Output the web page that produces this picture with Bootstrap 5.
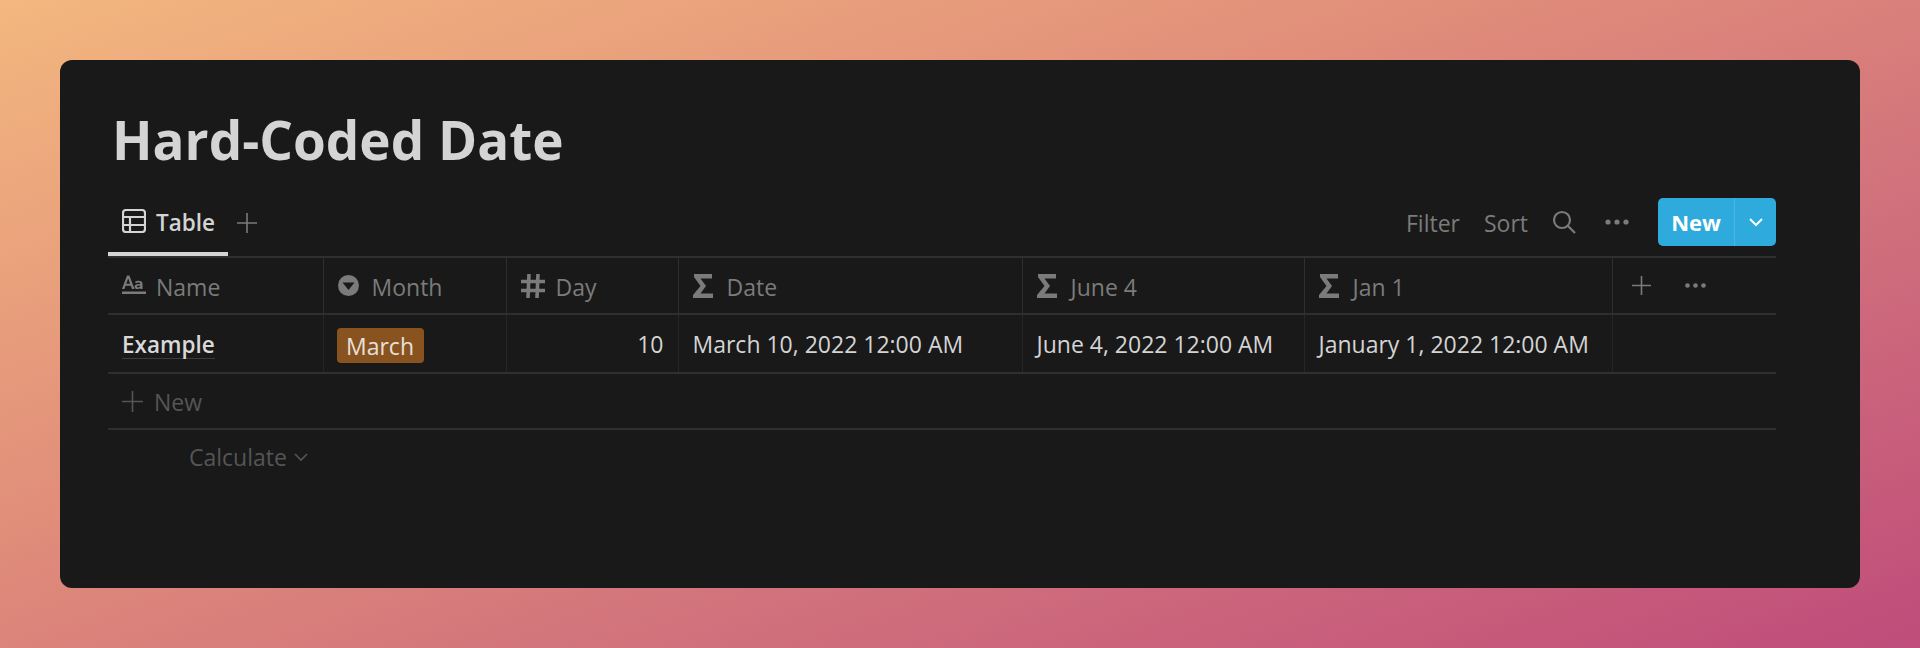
<!doctype html>
<html lang="en"><head><meta charset="utf-8"><title>Hard-Coded Date</title>
<link rel="stylesheet" href="https://cdn.jsdelivr.net/npm/bootstrap@5.3.0/dist/css/bootstrap.min.css">
<style>
html,body{height:648px;overflow:hidden}
body{background:linear-gradient(160deg,#f3b77f 0%,#e2917a 36%,#d06f7c 68%,#bf4c7a 100%);padding:60px;font-family:"Open Sans","Liberation Sans",sans-serif}
.panel{background:#191919;height:528px;border-radius:12px;padding:46px 84px 0 48px;color:#d4d4d4}
.page-title{font-size:53px;font-weight:700;line-height:68px;margin:0 0 0 4px;color:#d4d4d4}
.tabbar{height:62px;margin-top:20px;font-size:23px}
.tab-active{width:120px;height:62px;border-bottom:4px solid #d4d4d4;padding:0 0 6px 14px;font-weight:600;font-size:22.500px;gap:10px}
.tab-active span{padding-top:6px}
.tab-icon{margin-top:2px}
.plus-tab{margin:-5px 0 0 8px}
.action-group{margin-bottom:6px;color:#7b7b7b}
.action-text{padding-top:2px}
.gap-wide{margin-left:29px}
.new-btn{width:118px;height:48px;background:#2eaadc;border-radius:5px;color:#fff;font-weight:700;font-size:22px}
.new-main{width:77px;border-right:1px solid #4ab6e1}
.db-table{table-layout:fixed;width:1668px;margin:0;font-size:23px;--bs-table-bg:transparent;--bs-table-color:#d4d4d4;--bs-table-border-color:#2f2f2f;border-top:2px solid #2f2f2f}
.db-table th,.db-table td{padding:0 14px;vertical-align:middle;border-right:1px solid #262626;border-bottom:2px solid #2f2f2f;box-shadow:none;white-space:nowrap}
.db-table th{height:57px;font-weight:400;color:#7b7b7b;border-right-color:#2f2f2f}
.db-table td{height:59px;padding-top:2px}
.db-table tr>*:last-child{border-right:0}
.head-cell{gap:10px}
.head-cell span{padding-top:4px}
.gap-tag{gap:13px}
.gap-day{gap:11px}
.gap-sigma{gap:14px}
.row-name{font-weight:600;font-size:22.500px;color:#d9d9d9}
.row-name span{border-bottom:1px solid #3c3c3c;line-height:27px;display:inline-block}
.tag-march{display:block;background:#89531f;border-radius:4px;height:35px;width:87px;line-height:37px;text-align:center;color:#e6e0da;margin:1px 0 0 -1px}
.new-row{height:56px;border-bottom:2px solid #2f2f2f;padding-left:14px;color:#555;font-size:23px;gap:11px;width:1668px}
.new-row span{padding-top:2px}
.calc-row{height:54px;padding-left:81px;color:#555;font-size:23px;gap:7px}
.extra-head{gap:34px;padding-left:5px}
svg{display:block;flex:none}
</style></head>
<body>
<div class="panel">
  <h1 class="page-title">Hard-Coded Date</h1>
  <div class="tabbar d-flex align-items-center justify-content-between">
    <div class="d-flex align-items-center">
      <div class="tab-active d-flex align-items-center">
        <svg class="tab-icon" width="24" height="24" viewBox="0 0 24 24" fill="none" stroke="#d4d4d4" stroke-width="2.200"><rect x="1" y="1" width="22" height="22" rx="3"/><path d="M1 8h22M1 16h22M8 8v15"/></svg>
        <span>Table</span>
      </div>
      <svg class="plus-tab" width="22" height="22" viewBox="0 0 22 22" stroke="#7b7b7b" stroke-width="1.600"><path d="M11 1v20M1 11h20"/></svg>
    </div>
    <div class="d-flex align-items-center action-group">
      <span class="action-text">Filter</span><span class="ms-4 action-text">Sort</span>
      <svg class="ms-4" width="24" height="24" viewBox="0 0 24 24" fill="none" stroke="#7b7b7b" stroke-width="2.200"><circle cx="10" cy="10" r="8"/><path d="M16 16l7 7"/></svg>
      <svg class="gap-wide" width="24" height="6" viewBox="0 0 24 6" fill="#7b7b7b"><circle cx="3" cy="3" r="2.600"/><circle cx="12" cy="3" r="2.600"/><circle cx="21" cy="3" r="2.600"/></svg>
      <div class="new-btn d-flex gap-wide">
        <div class="new-main d-flex align-items-center justify-content-center">New</div>
        <div class="flex-grow-1 d-flex align-items-center justify-content-center"><svg width="14" height="9" viewBox="0 0 14 9" fill="none" stroke="#fff" stroke-width="2"><path d="M1 1l6 6 6-6"/></svg></div>
      </div>
    </div>
  </div>
  <table class="table db-table">
    <colgroup><col style="width:215px"><col style="width:183px"><col style="width:172px"><col style="width:344px"><col style="width:282px"><col style="width:308px"><col style="width:164px"></colgroup>
    <thead><tr>
      <th><div class="d-flex align-items-center head-cell"><svg width="24" height="22" viewBox="0 0 24 22" fill="#7b7b7b"><path d="M0 14L5 .5h2.400L12.500 14H10l-1.200-3.300H3.600L2.400 14zM4.300 8.800h3.800L6.200 3.400zM13 6.800c1.400-1.300 7.500-2.200 7.500 1.900V14h-2.200v-1c-1.600 1.700-5.800 1.500-5.800-1.300 0-2.800 4-2.800 5.800-2.800 0-1.800-3-1.500-4.500-.6zM18.300 10.600c-1.200 0-3.500-.1-3.500 1 0 1.300 3.500 1 3.500-1z"/><rect y="16.500" width="24" height="2.500"/></svg><span>Name</span></div></th>
      <th><div class="d-flex align-items-center head-cell gap-tag"><svg width="21" height="21" viewBox="0 0 21 21"><circle cx="10.500" cy="10.500" r="10.500" fill="#7b7b7b"/><path d="M4.500 7.500h12l-6 7.500z" fill="#191919"/></svg><span>Month</span></div></th>
      <th><div class="d-flex align-items-center head-cell gap-day"><svg width="24" height="24" viewBox="0 0 24 24" stroke="#7b7b7b" stroke-width="3.600"><path d="M8 0L7 24M17 0l-1 24M0 7.500h24M0 16.500h24"/></svg><span>Day</span></div></th>
      <th><div class="d-flex align-items-center head-cell gap-sigma"><svg width="20" height="24" viewBox="0 0 20 24" fill="#7b7b7b"><path d="M1 0h18v4.400H7.500l5.500 7.600-5.500 7.600H20V24H0v-3l7.500-9L1 3z"/></svg><span>Date</span></div></th>
      <th><div class="d-flex align-items-center head-cell gap-sigma"><svg width="20" height="24" viewBox="0 0 20 24" fill="#7b7b7b"><path d="M1 0h18v4.400H7.500l5.500 7.600-5.500 7.600H20V24H0v-3l7.500-9L1 3z"/></svg><span>June 4</span></div></th>
      <th><div class="d-flex align-items-center head-cell gap-sigma"><svg width="20" height="24" viewBox="0 0 20 24" fill="#7b7b7b"><path d="M1 0h18v4.400H7.500l5.500 7.600-5.500 7.600H20V24H0v-3l7.500-9L1 3z"/></svg><span>Jan 1</span></div></th>
      <th><div class="d-flex align-items-center extra-head"><svg width="19" height="19" viewBox="0 0 19 19" stroke="#7b7b7b" stroke-width="1.600"><path d="M9.500 0v19M0 9.500h19"/></svg><svg width="21" height="5" viewBox="0 0 21 5" fill="#7b7b7b"><circle cx="2.500" cy="2.500" r="2.300"/><circle cx="10.500" cy="2.500" r="2.300"/><circle cx="18.500" cy="2.500" r="2.300"/></svg></div></th>
    </tr></thead>
    <tbody><tr>
      <td class="row-name"><span>Example</span></td>
      <td><span class="tag-march">March</span></td>
      <td class="text-end">10</td>
      <td>March 10, 2022 12:00 AM</td>
      <td>June 4, 2022 12:00 AM</td>
      <td>January 1, 2022 12:00 AM</td>
      <td></td>
    </tr></tbody>
  </table>
  <div class="new-row d-flex align-items-center"><svg width="21" height="21" viewBox="0 0 21 21" stroke="#555" stroke-width="1.600"><path d="M10.500 0v21M0 10.500h21"/></svg><span>New</span></div>
  <div class="calc-row d-flex align-items-center"><span>Calculate</span><svg width="14" height="9" viewBox="0 0 14 9" fill="none" stroke="#555" stroke-width="1.600"><path d="M1 1l6 6 6-6"/></svg></div>
</div>
</body></html>
